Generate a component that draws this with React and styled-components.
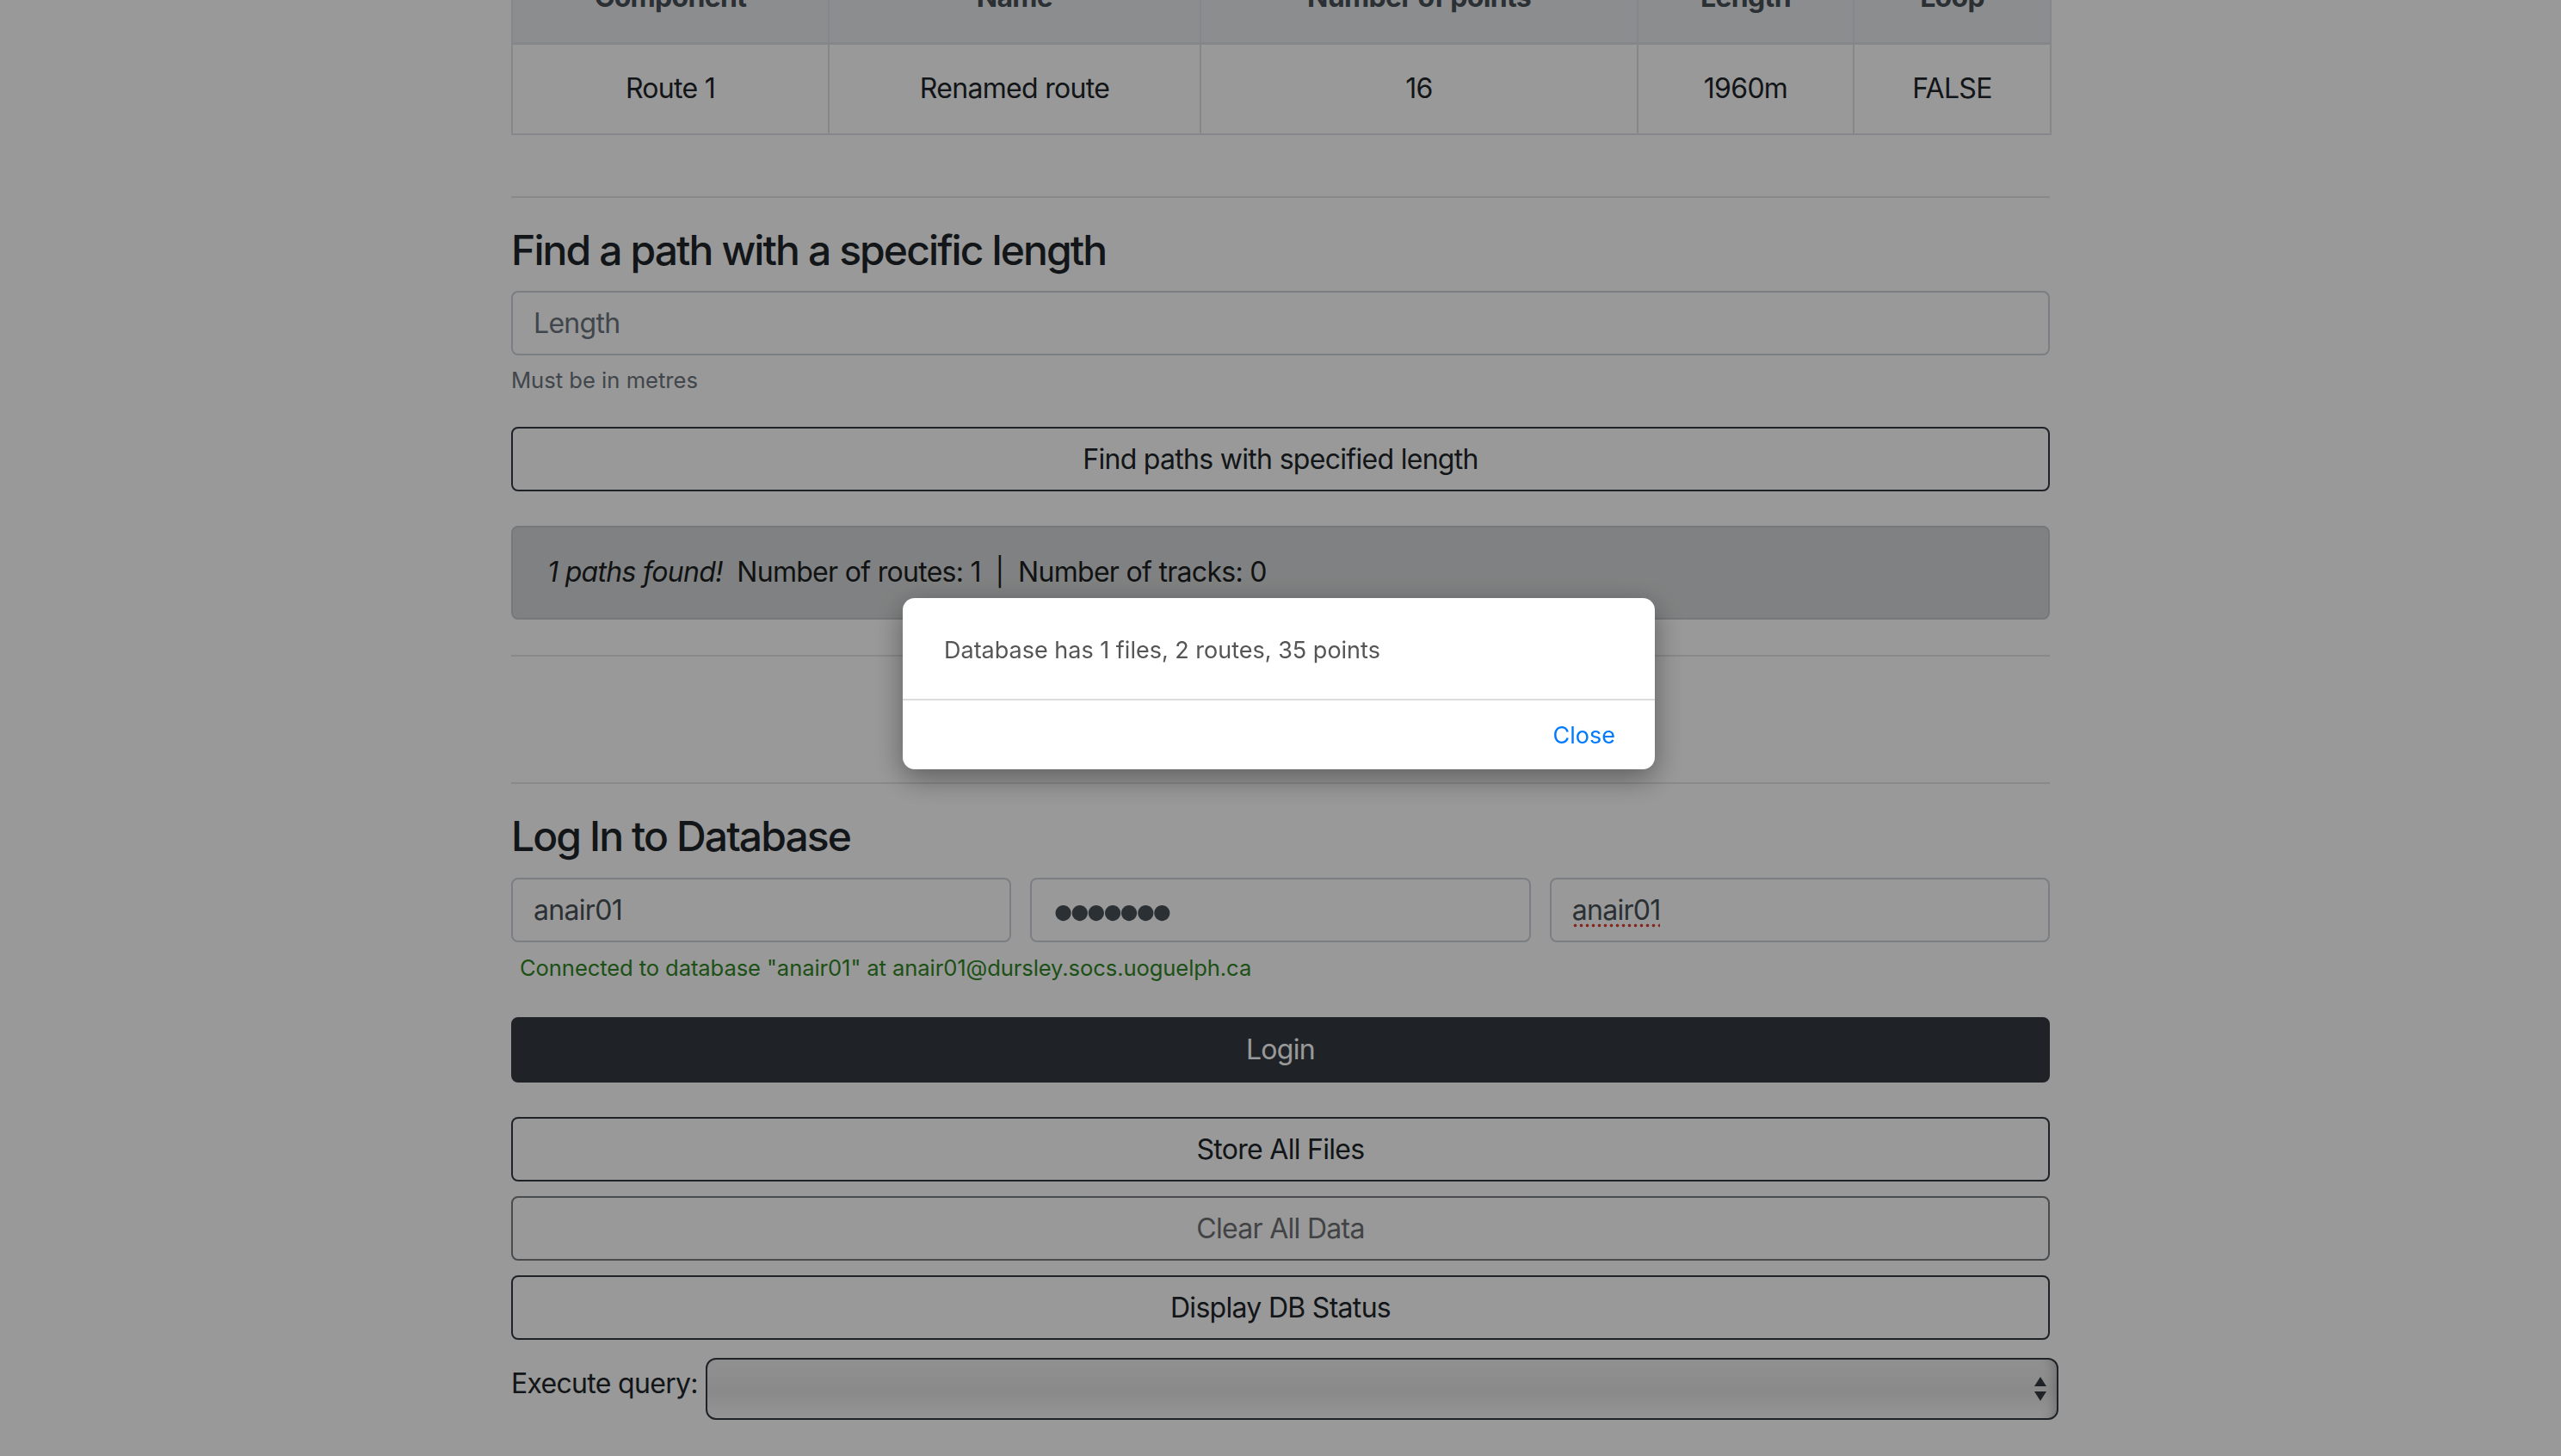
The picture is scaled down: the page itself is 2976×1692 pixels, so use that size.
import styled, { createGlobalStyle } from "styled-components";

const GlobalStyle = createGlobalStyle`
  html, body {
    margin: 0;
    padding: 0;
    background: #fff;
  }
  body {
    font-family: Inter, "Noto Sans", "Liberation Sans", sans-serif;
    font-size: 32px;
    line-height: 1.5;
    letter-spacing: -0.7px;
    color: #212529;
    overflow: hidden;
  }
  * { box-sizing: border-box; }
`;

const Page = styled.div`
  min-height: 1692px;
  position: relative;
`;

const Container = styled.div`
  width: 1788px;
  margin: 0 auto;
  /* page is scrolled a little: table head sits above the top edge */
  margin-top: -56px;
`;

const RouteTable = styled.table`
  width: 100%;
  table-layout: fixed;
  border-collapse: collapse;
  border: 2px solid #dee2e6;
  text-align: center;
`;

const HeadCell = styled.th`
  width: ${(p) => p.w}px;
  background: #e9ecef;
  border: 2px solid #dee2e6;
  border-bottom: 3px solid #dee2e6;
  padding: 27px 24px 28px;
  line-height: 48px;
  font-weight: 700;
  color: #495057;
`;

const Cell = styled.td`
  border: 2px solid #dee2e6;
  padding: 27px 24px 28px;
  line-height: 48px;
`;

const Divider = styled.hr`
  border: 0;
  border-top: 2px solid rgba(0, 0, 0, 0.1);
  margin: ${(p) => p.top || 0}px 0 ${(p) => p.bottom || 0}px;
`;

const SectionTitle = styled.h4`
  font-size: 48px;
  font-weight: 500;
  line-height: 1.2;
  margin: 0 0 ${(p) => p.gap}px;
  letter-spacing: -1.9px;
`;

const TextInput = styled.input`
  display: block;
  width: 100%;
  height: 75px;
  padding: 0 24px;
  font: inherit;
  font-size: 32px;
  letter-spacing: -0.7px;
  color: #495057;
  background: #fff;
  border: 2px solid #ced4da;
  border-radius: 8px;
  outline: none;
  &::placeholder {
    color: #6c757d;
  }
`;

const PasswordInput = styled(TextInput)`
  font-size: 58px;
  letter-spacing: -13.5px;
  padding-left: 20px;
  color: #495057;
`;

const InputWrap = styled.div`
  position: relative;
`;

/* red dotted spell-check mark under the database name */
const SpellMark = styled.span`
  position: absolute;
  left: 26px;
  top: 53px;
  width: 102px;
  height: 5px;
  background: radial-gradient(circle, #e0453a 1.6px, transparent 2.2px) 0 0 / 7px 5px repeat-x;
  pointer-events: none;
`;

const HelpText = styled.div`
  margin-top: 10px;
  font-size: 25.6px;
  letter-spacing: 0;
  color: #6c757d;
`;

const StatusText = styled.div`
  margin: 11px 0 0 10px;
  font-size: 25.6px;
  letter-spacing: -0.1px;
  color: #318626;
`;

const Button = styled.button`
  display: block;
  width: 100%;
  height: ${(p) => p.h || 75}px;
  margin-top: ${(p) => p.top || 0}px;
  font: inherit;
  font-size: 32px;
  line-height: 48px;
  letter-spacing: -0.7px;
  border-radius: 8px;
  border: 2px solid #343a40;
  background: ${(p) => (p.dark ? "#343a40" : "transparent")};
  color: ${(p) => (p.dark ? "#fff" : "#212529")};
  opacity: ${(p) => (p.disabled ? 0.65 : 1)};
  padding-top: 2px;
  cursor: pointer;
`;

const ResultAlert = styled.div`
  margin-top: 40px;
  padding: 28px 40px 29px;
  line-height: 48px;
  background: #d6d8d9;
  border: 2px solid #c6c8ca;
  border-radius: 8px;
  color: #1b1e21;
  white-space: pre;
`;

const Hidden = styled.div`
  height: 146px;
`;

const LoginGrid = styled.div`
  display: grid;
  grid-template-columns: repeat(3, 1fr);
  gap: 22px;
`;

const QueryRow = styled.div`
  display: flex;
  align-items: center;
  gap: 9px;
  margin-top: 21px;
  margin-right: -10px;
`;

const QueryLabel = styled.label`
  padding-bottom: 12px;
  white-space: nowrap;
`;

const SelectWrap = styled.div`
  position: relative;
  flex: 1;
`;

const QuerySelect = styled.select`
  display: block;
  width: 100%;
  height: 72px;
  appearance: none;
  border: 2px solid #343a40;
  border-radius: 12px;
  background: linear-gradient(#f0f0f0, #e6e6e6 55%, #f8f8f8);
  box-shadow: inset -14px 0 14px -12px rgba(0, 0, 0, 0.25);
  font: inherit;
  outline: none;
`;

const Arrows = styled.svg`
  position: absolute;
  right: 14px;
  top: 22px;
  pointer-events: none;
`;

const Backdrop = styled.div`
  position: fixed;
  inset: 0;
  background: rgba(0, 0, 0, 0.4);
`;

const Modal = styled.div`
  position: fixed;
  top: 695px;
  left: 50%;
  transform: translateX(-50%);
  margin-left: -2px;
  width: 874px;
  background: #fff;
  border-radius: 14px;
  box-shadow: 0 10px 34px rgba(0, 0, 0, 0.4);
  font-size: 27px;
  letter-spacing: 0;
`;

const ModalBody = styled.div`
  padding: 41px 48px 36px;
  line-height: 40px;
  color: #555;
`;

const ModalFooter = styled.div`
  border-top: 2px solid #dcdcdc;
  padding: 20px 46px 18px;
  display: flex;
  justify-content: flex-end;
`;

const LinkButton = styled.button`
  border: 0;
  background: none;
  padding: 0;
  font: inherit;
  line-height: 42px;
  color: #007bff;
  cursor: pointer;
`;

const columns = [
  ["Component", 368],
  ["Name", 432],
  ["Number of points", 508],
  ["Length", 251],
  ["Loop", 229],
];

const routes = [["Route 1", "Renamed route", "16", "1960m", "FALSE"]];

export default function App() {
  return (
    <Page>
      <GlobalStyle />
      <Container>
        <RouteTable>
          <thead>
            <tr>
              {columns.map(([name, w]) => (
                <HeadCell key={name} w={w}>
                  {name}
                </HeadCell>
              ))}
            </tr>
          </thead>
          <tbody>
            {routes.map((row) => (
              <tr key={row[0]}>
                {row.map((v, i) => (
                  <Cell key={i}>{v}</Cell>
                ))}
              </tr>
            ))}
          </tbody>
        </RouteTable>

        <Divider top={71} bottom={32} />
        <SectionTitle gap={18}>Find a path with a specific length</SectionTitle>
        <TextInput placeholder="Length" />
        <HelpText>Must be in metres</HelpText>
        <Button top={35}>Find paths with specified length</Button>
        <ResultAlert>
          <em>1 paths found!</em>{"  Number of routes: 1  |  Number of tracks: 0"}
        </ResultAlert>
        <Divider top={41} />
        <Hidden />
        <Divider bottom={32} />

        <SectionTitle gap={19}>Log In to Database</SectionTitle>
        <LoginGrid>
          <TextInput defaultValue="anair01" />
          <PasswordInput type="password" defaultValue="anair01" />
          <InputWrap>
            <TextInput defaultValue="anair01" spellCheck="false" />
            <SpellMark />
          </InputWrap>
        </LoginGrid>
        <StatusText>
          Connected to database "anair01" at anair01@dursley.socs.uoguelph.ca
        </StatusText>
        <Button dark top={38} h={76}>Login</Button>
        <Button top={40}>Store All Files</Button>
        <Button top={17} disabled>Clear All Data</Button>
        <Button top={17}>Display DB Status</Button>
        <QueryRow>
          <QueryLabel>Execute query:</QueryLabel>
          <SelectWrap>
            <QuerySelect>
              <option></option>
            </QuerySelect>
            <Arrows width="14" height="28" viewBox="0 0 14 28">
              <path d="M7 0 L14 11 L0 11 Z" fill="#343a40" />
              <path d="M0 17 L14 17 L7 28 Z" fill="#343a40" />
            </Arrows>
          </SelectWrap>
        </QueryRow>
      </Container>

      <Backdrop />
      <Modal>
        <ModalBody>Database has 1 files, 2 routes, 35 points</ModalBody>
        <ModalFooter>
          <LinkButton>Close</LinkButton>
        </ModalFooter>
      </Modal>
    </Page>
  );
}
